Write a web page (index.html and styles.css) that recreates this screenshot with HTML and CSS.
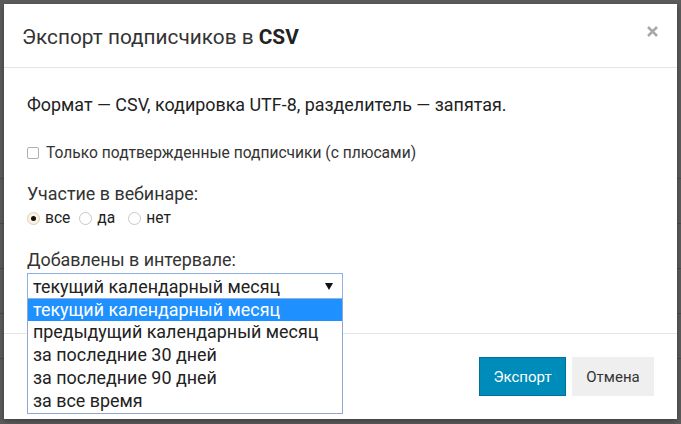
FILE: index.html
```html
<!DOCTYPE html>
<html lang="ru">
<head>
<meta charset="utf-8">
<link rel="stylesheet" href="styles.css">
</head>
<body>
<div class="page">
  <div class="page-row"></div>
  <div class="page-row"></div>
  <div class="page-row"></div>
  <div class="page-row"></div>
  <div class="page-row"></div>
</div>
<div class="modal">
  <div class="modal-header">
    <h4 class="modal-title">Экспорт подписчиков в <b>CSV</b></h4>
    <svg class="close" width="11" height="11" viewBox="0 0 11 11"><path d="M1 1L10 10M10 1L1 10" stroke="#a9a9a9" stroke-width="2.6"/></svg>
  </div>
  <div class="modal-body">
    <p class="info">Формат — CSV, кодировка UTF-8, разделитель — запятая.</p>
    <label class="check"><span class="checkbox"></span>Только подтвержденные подписчики (с плюсами)</label>
    <div class="label">Участие в вебинаре:</div>
    <div class="radios">
      <label class="radio-item"><span class="radio on"></span>все</label>
      <label class="radio-item"><span class="radio"></span>да</label>
      <label class="radio-item"><span class="radio"></span>нет</label>
    </div>
    <div class="label label2">Добавлены в интервале:</div>
    <div class="select-wrap">
      <div class="select"><span>текущий календарный месяц</span><span class="arrow"></span></div>
      <ul class="options">
        <li class="selected">текущий календарный месяц</li>
        <li>предыдущий календарный месяц</li>
        <li>за последние 30 дней</li>
        <li>за последние 90 дней</li>
        <li>за все время</li>
      </ul>
    </div>
  </div>
  <div class="modal-footer">
    <button class="btn btn-primary">Экспорт</button>
    <button class="btn btn-default">Отмена</button>
  </div>
</div>
</body>
</html>
```
FILE: styles.css
```css
html, body {
  margin: 0;
  padding: 0;
}
body {
  width: 681px;
  height: 424px;
  overflow: hidden;
  background: #5c5c5c;
  font-family: Roboto, "Liberation Sans", sans-serif;
  color: #222;
  position: relative;
}
.page {
  padding-top: 134px;
}
.page-row {
  height: 44px;
  border-bottom: 1px solid #4c4c4c;
}
.modal {
  position: absolute;
  left: 4px;
  top: 4px;
  width: 673px;
  height: 415px;
  background: #fff;
  box-shadow: 0 2px 6px rgba(0,0,0,0.35);
  display: flex;
  flex-direction: column;
}
.modal-header {
  height: 64px;
  box-sizing: border-box;
  border-bottom: 1px solid #e5e5e5;
  display: flex;
  align-items: center;
  justify-content: space-between;
  padding: 0 19px 2px 18px;
}
.modal-title {
  margin: 0;
  font-size: 20.8px;
  font-weight: 400;
  color: #333;
  padding-top: 4px;
}
.modal-title b {
  font-weight: 700;
  color: #222;
}
.close {
  display: block;
  margin-top: -6px;
}
.modal-body {
  flex: 0 0 auto;
  padding: 26px 23px 0;
  height: 265px;
  box-sizing: border-box;
}
.info {
  margin: 0 0 27px;
  font-size: 17.9px;
  line-height: 22px;
}
.check {
  display: flex;
  align-items: center;
  font-size: 15.6px;
  line-height: 20px;
  color: #333;
}
.checkbox {
  width: 10px;
  height: 10px;
  border: 1px solid #b0b0b0;
  border-radius: 2px;
  margin-right: 7px;
  background: #fff;
}
.label {
  margin-top: 20px;
  font-size: 17.9px;
  line-height: 22px;
  color: #333;
}
.label2 {
  margin-top: 21px;
}
.radios {
  margin-top: 3px;
  display: flex;
  font-size: 15.6px;
  line-height: 20px;
  color: #222;
}
.radio-item {
  display: flex;
  align-items: center;
}
.radio-item:nth-child(1) {
  margin-right: 9px;
}
.radio-item:nth-child(2) {
  margin-right: 13px;
}
.radio {
  width: 11px;
  height: 11px;
  border: 1px solid #c8c8c8;
  border-radius: 50%;
  margin-right: 5px;
  position: relative;
}
.radio.on {
  border-color: #e0cfa8;
  background: #fbf3e3;
}
.radio.on::after {
  content: "";
  position: absolute;
  left: 3px;
  top: 3px;
  width: 5px;
  height: 5px;
  border-radius: 50%;
  background: #111;
}
.select-wrap {
  margin-top: 2px;
  position: relative;
  width: 316px;
}
.select {
  height: 26px;
  box-sizing: border-box;
  border: 1px solid #8fb0e4;
  display: flex;
  align-items: center;
  justify-content: space-between;
  padding: 0 9px 0 5px;
  font-size: 17.9px;
  color: #222;
}
.arrow {
  width: 0;
  height: 0;
  border-left: 4px solid transparent;
  border-right: 4px solid transparent;
  border-top: 7px solid #111;
  margin-top: 1px;
}
.options {
  position: absolute;
  left: 0;
  top: 26px;
  width: 316px;
  box-sizing: border-box;
  margin: 0;
  padding: 0;
  list-style: none;
  background: #fff;
  border: 1px solid #8fa9d6;
  border-top: 0;
  z-index: 2;
}
.options li {
  height: 23px;
  line-height: 22px;
  padding-left: 5px;
  font-size: 17.9px;
  color: #222;
}
.options li.selected {
  background: #1e90ff;
  color: #fff;
  height: 22px;
}
.modal-footer {
  border-top: 1px solid #e5e5e5;
  flex: 1;
  display: flex;
  justify-content: flex-end;
  align-items: flex-start;
  padding: 23px 23px 0 0;
  gap: 6px;
}
.btn {
  height: 39px;
  padding: 0;
  font-family: Roboto, "Liberation Sans", sans-serif;
  font-size: 15px;
  border: 1px solid transparent;
  cursor: pointer;
}
.btn-primary {
  background: #008cba;
  border-color: #007095;
  color: #fff;
  width: 87px;
}
.btn-default {
  background: #efefef;
  border-color: #efefef;
  color: #333;
  width: 82px;
}
```
